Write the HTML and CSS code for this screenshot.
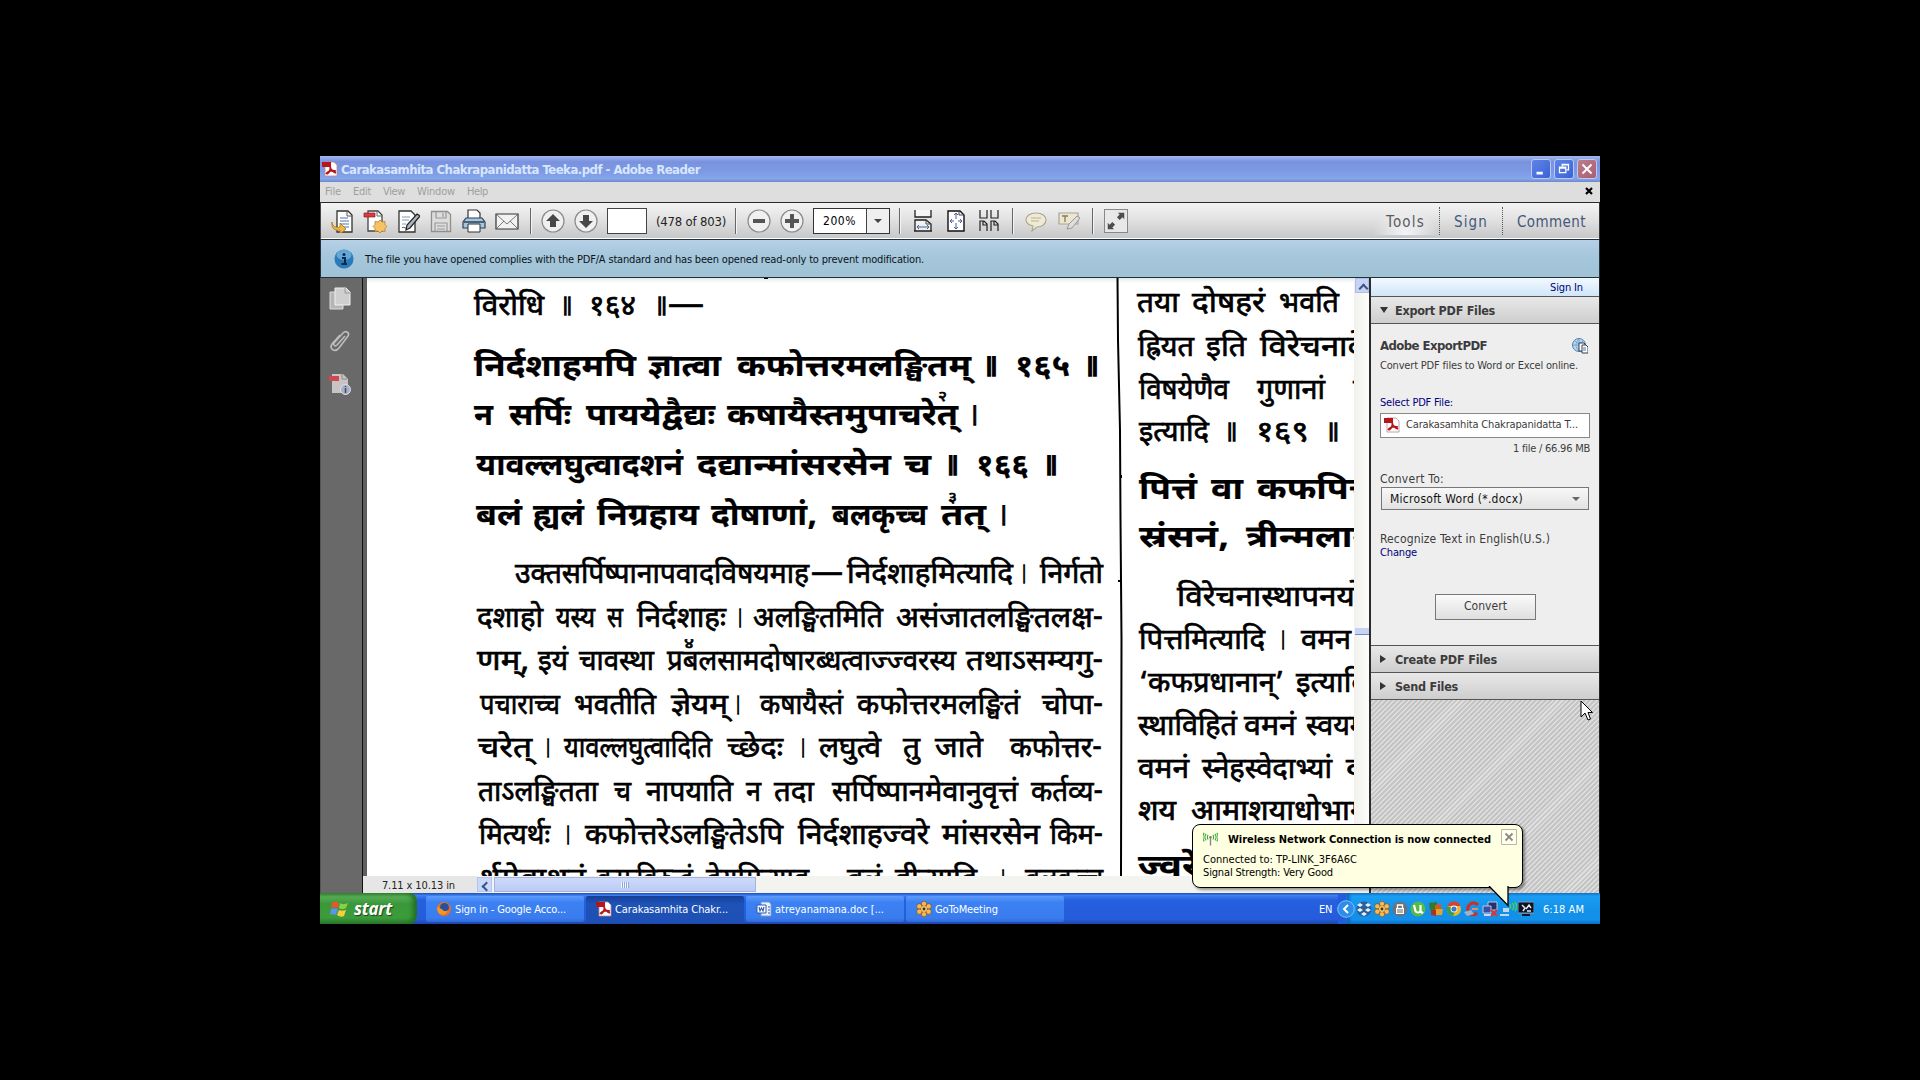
FILE: index.html
```html
<!DOCTYPE html>
<html lang="en">
<head>
    <meta charset="UTF-8">
    <title>Carakasamhita Chakrapanidatta Teeka.pdf - Adobe Reader</title>
    <link rel="stylesheet" href="styles.css">
</head>
<body>

<!-- Shared icons -->
<svg class="defs" width="0" height="0">
    <symbol id="pdf" viewBox="0 0 16 16">
        <path d="M3 1h9l3 3v11H3z" fill="#fff" stroke="#b88" stroke-width=".8"/>
        <path d="M0 1h9v5H0z" fill="#b5161d"/>
        <path d="M5 13c3-2 4-5 3-9M4 13c2-3 6-4 10-3M8 6c1 3 3 5 6 6" fill="none" stroke="#b5161d" stroke-width="1.7"/>
    </symbol>
    <symbol id="flower" viewBox="0 0 16 16">
        <g fill="#f9b850" stroke="#5a3a10" stroke-width=".5">
            <circle cx="8" cy="2.800" r="2.600"/><circle cx="8" cy="13.200" r="2.600"/>
            <circle cx="3.300" cy="5.300" r="2.600"/><circle cx="12.700" cy="5.300" r="2.600"/>
            <circle cx="3.300" cy="10.700" r="2.600"/><circle cx="12.700" cy="10.700" r="2.600"/>
        </g>
        <circle cx="8" cy="8" r="3" fill="#f9c463"/><circle cx="8" cy="8" r="1.400" fill="#4a2c08"/>
    </symbol>
</svg>

<div class="window">
    <div class="title-bar">
        <svg class="title-icon"><use href="#pdf"/></svg>
        <span class="title-text" data-w="359">Carakasamhita Chakrapanidatta Teeka.pdf - Adobe Reader</span>
        <div class="window-buttons">
            <svg class="win-btn" viewBox="0 0 20 20"><path d="M5 13h7v3H5z" fill="#fff"/></svg>
            <svg class="win-btn" viewBox="0 0 20 20"><path d="M8 7V5h7v6h-2M8 5.5h7M5 8h7v6H5zM5 9h7" fill="none" stroke="#fff" stroke-width="1.4"/></svg>
            <svg class="win-btn close" viewBox="0 0 20 20"><path d="M5 5l10 10M15 5L5 15" stroke="#fff" stroke-width="2.2"/></svg>
        </div>
    </div>

    <div class="menu-bar">
        <span data-w="16">File</span>
        <span data-w="18">Edit</span>
        <span data-w="22">View</span>
        <span data-w="38">Window</span>
        <span data-w="21">Help</span>
        <svg class="doc-close" viewBox="0 0 8 8"><path d="M1 1l6 6M7 1L1 7" stroke="#000" stroke-width="2.2"/></svg>
    </div>

    <div class="toolbar">
        <div class="tool-group">
            <svg viewBox="0 0 24 24"><path d="M7 2h11l4 4v17H7z" fill="#fff" stroke="#333" stroke-width="1.3"/><path d="M17 2v5h5" fill="none" stroke="#555"/><path d="M10 9h8M10 12h9M10 15h9M12 18h7" stroke="#4b78b4" stroke-width="1.2"/><path d="M2 13c0 5 5 6 8 5v-4l6 6-6 5v-4c-4 1-9-1-8-8z" fill="#f2b844" stroke="#a9731a" stroke-width=".8"/></svg>
            <svg viewBox="0 0 24 24"><path d="M5 2h10l4 4v16H5z" fill="#fff" stroke="#444" stroke-width="1.3"/><path d="M14 2v5h5" fill="none" stroke="#666"/><path d="M1 4h11v4H1z" fill="#d93a40" stroke="#8e1a1e" stroke-width=".7"/><path d="M17 11l2 2 3-.5v3l2 2-2 2v3l-3-.5-2 2-2-2-3 .5v-3l-2-2 2-2v-3l3 .5z" fill="#f5c363" stroke="#b08030" stroke-width=".8"/></svg>
            <svg viewBox="0 0 24 24"><path d="M3 2h12l4 4v17H3z" fill="#fff" stroke="#333" stroke-width="1.3"/><path d="M6 8h8M6 11h7M6 15h4" stroke="#8298b8"/><path d="M21 5l3 2-10 12-4 2 1-5z" fill="#aab4c2" stroke="#222" stroke-width="1.2"/><path d="M6 19c2-2 3 1 5 0" fill="none" stroke="#334"/></svg>
            <svg viewBox="0 0 24 24"><path d="M2.500 2.500h16l3 3v17h-19z" fill="#ddd" stroke="#8f8f8f" stroke-width="1.3"/><path d="M7 3v6h10V3M6 22v-8h12v8M14 4v4M8 17h8M8 20h8" fill="none" stroke="#999" stroke-width="1.2"/></svg>
            <svg viewBox="0 0 24 24"><path d="M6 10V1h9l3 3v6" fill="#fff" stroke="#333" stroke-width="1.2"/><path d="M4 9h16l3 4v6H1v-6z" fill="#a8c5de" stroke="#2d4257" stroke-width="1.2"/><path d="M2 13h20" stroke="#2d4257" stroke-width="1.5"/><path d="M6 15h12v8H6z" fill="#fff" stroke="#333"/></svg>
            <svg viewBox="0 0 24 24"><path d="M1 5h22v15H1z" fill="#f2f2f2" stroke="#333" stroke-width="1.2"/><path d="M2 6l10 9L22 6M2 19l7-7M22 19l-7-7" fill="none" stroke="#777"/></svg>
        </div>
        <i class="sep"></i>
        <div class="tool-group nav-group">
            <svg viewBox="0 0 24 24"><circle cx="12" cy="12" r="11" class="round"/><path d="M12 5l7 7h-4v6H9v-6H5z" fill="#484848"/></svg>
            <svg viewBox="0 0 24 24"><circle cx="12" cy="12" r="11" class="round"/><path d="M12 19l7-7h-4V6H9v6H5z" fill="#484848"/></svg>
            <div class="page-input"></div>
            <span class="page-count" data-w="70">(478 of 803)</span>
        </div>
        <i class="sep"></i>
        <div class="tool-group">
            <svg viewBox="0 0 24 24"><circle cx="12" cy="12" r="11" class="round"/><path d="M6 10h12v4H6z" fill="#555"/></svg>
            <svg viewBox="0 0 24 24"><circle cx="12" cy="12" r="11" class="round"/><path d="M5 10h5V5h4v5h5v4h-5v5h-4v-5H5z" fill="#555"/></svg>
            <div class="zoom-box"><span data-w="33">200%</span><b></b></div>
        </div>
        <i class="sep"></i>
        <div class="tool-group">
            <svg viewBox="0 0 24 24"><path d="M4 1v7h16V1M4 22V11h11l5 4v7M3 22h18" fill="#fff" fill-opacity=".6" stroke="#222" stroke-width="1.3"/><path d="M15 11v4h5" fill="none" stroke="#444"/><path d="M6 18h12M8 16l-2 2 2 2M16 16l2 2-2 2" fill="none" stroke="#3f63a0"/></svg>
            <svg viewBox="0 0 24 24"><path d="M4 2h12l4 4v16H4z" fill="#fff" stroke="#111" stroke-width="1.4"/><path d="M15 2v4h5" fill="none" stroke="#444"/><path d="M12 4v6M12 14v6M6 12h4M14 12h4M10 6l2-2 2 2M10 18l2 2 2-2M8 10l-2 2 2 2M16 10l2 2-2 2" fill="none" stroke="#4a5f96"/></svg>
            <svg viewBox="0 0 24 24"><path d="M3 1v8h7V1M14 1v8h7V1M3 22V12h4l3 3v7M14 22V12h4l3 3v7M6 12v4h4M17 12v4h4" fill="none" stroke="#222" stroke-width="1.2"/></svg>
        </div>
        <i class="sep"></i>
        <div class="tool-group">
            <svg viewBox="0 0 24 24"><path d="M12 4c6 0 10 3 10 7s-4 7-9 7l-5 4 1-5c-4-1-7-3-7-6 0-4 4-7 10-7z" fill="#efead6" stroke="#aca78f" stroke-width="1.2"/><path d="M7 9h10M7 12h8" stroke="#b9b290"/></svg>
            <svg viewBox="0 0 24 24"><path d="M2 4h19v11H2z" fill="#ece6cf" stroke="#aaa58f" stroke-width="1.2"/><path d="M5 7h6M8 7v6" stroke="#827c66" stroke-width="1.3"/><path d="M20 7l3 2-8 10-5 1 2-5z" fill="#ddd" stroke="#999"/></svg>
        </div>
        <i class="sep"></i>
        <svg class="full-btn" viewBox="0 0 24 24"><path d="M14 3h7v7l-2-2-3 3-3-3 3-3zM10 21H3v-7l2 2 3-3 3 3-3 3z" fill="#4d4d4d"/></svg>
        <div class="tabs">
            <span class="tab tools"><span data-w="39">Tools</span></span>
            <span class="tab sign"><span data-w="34">Sign</span></span>
            <span class="tab comment"><span data-w="69">Comment</span></span>
        </div>
    </div>

    <div class="info-bar">
        <svg viewBox="0 0 20 20"><circle cx="10" cy="10" r="9.5" fill="#2c7ab8"/><ellipse cx="10" cy="6" rx="7.5" ry="5" fill="#7db9e4" opacity=".7"/><path d="M8 9h3v6M7.500 15h5.500" fill="none" stroke="#062a4a" stroke-width="2"/><circle cx="10" cy="5.5" r="1.5" fill="#062a4a"/></svg>
        <span data-w="559">The file you have opened complies with the PDF/A standard and has been opened read-only to prevent modification.</span>
    </div>

    <div class="content">
        <div class="nav-pane">
            <svg viewBox="0 0 24 24"><path d="M2 6h13v17H2z" fill="#b5b5b5" stroke="#ddd"/><path d="M7 2h11l4 4v13H7z" fill="#cfcfcf" stroke="#f0f0f0"/><path d="M17 2v5h5" fill="none" stroke="#999"/></svg>
            <svg viewBox="0 0 24 24"><path d="M17 7l-8 9c-2 2-4 0-3-2L15 4c3-3 7 0 5 3l-9 12c-4 5-10 1-7-4l8-9" fill="none" stroke="#bdbdbd" stroke-width="1.6"/></svg>
            <svg viewBox="0 0 24 24"><path d="M4 2h11l5 5v14H4z" fill="#c9c4c4"/><path d="M14 2v5h5" fill="none" stroke="#888"/><path d="M1 4h10v5H1z" fill="#cf4a4e"/><circle cx="17.5" cy="17.5" r="5" fill="#aab0c4" stroke="#e0e4ee"/><path d="M17.500 16v5M17.500 14v1" stroke="#3c4770" stroke-width="1.5"/></svg>
        </div>
        <div class="doc">
            <div class="doc-view">
                <svg class="page" id="page" viewBox="366 278 987 598">
                    <path class="rule" d="M1116.500 278L1117 340L1119 430L1119.500 520L1120.500 640L1120 876"/>
                    <path class="speck" d="M763 278h4v1h-4zM1117 580h3v2h-3zM1119 475h2v3h-2z"/>
                </svg>
                <div class="vscroll"><b class="up"></b><b class="thumb"></b></div>
            </div>
            <div class="doc-status">
                <span class="page-size"><span data-w="73">7.11 x 10.13 in</span></span>
                <b class="left"></b>
                <div class="hthumb"><i></i></div>
            </div>
        </div>
        <div class="side">
            <div class="sign-in"><span data-w="33">Sign In</span></div>
            <div class="head"><i class="open"></i><span data-w="100">Export PDF Files</span></div>
            <div class="export">
                <div class="export-title">
                    <span data-w="107">Adobe ExportPDF</span>
                    <svg viewBox="0 0 16 16"><circle cx="7" cy="7" r="6.5" fill="#b9d6ee" stroke="#4f7fae"/><path d="M1 7h12M7 1v12M3 3c3 3 5 3 8 0M7 1c-4 4-4 8 0 12" fill="none" stroke="#6f9cc4" stroke-width=".8"/><path d="M7 5h5l1 1v7H7z" fill="#fff" stroke="#345"/><path d="M10 7h4l2 2v6h-6z" fill="#fff" stroke="#345"/><path d="M11 10h3M11 12h3" stroke="#57a"/></svg>
                </div>
                <p class="desc"><span data-w="198">Convert PDF files to Word or Excel online.</span></p>
                <p class="link select-label"><span data-w="73">Select PDF File:</span></p>
                <div class="file-box"><svg><use href="#pdf"/></svg><span data-w="172">Carakasamhita Chakrapanidatta T...</span></div>
                <p class="size"><span data-w="77">1 file / 66.96 MB</span></p>
                <p class="to"><span data-w="64">Convert To:</span></p>
                <div class="select"><span data-w="133">Microsoft Word (*.docx)</span><i></i></div>
                <p class="recog"><span data-w="170">Recognize Text in English(U.S.)</span></p>
                <p class="link change"><span data-w="37">Change</span></p>
                <div class="convert"><span data-w="43">Convert</span></div>
            </div>
            <div class="head line"><i></i><span data-w="102">Create PDF Files</span></div>
            <div class="head line"><i></i><span data-w="63">Send Files</span></div>
            <div class="hatch"></div>
        </div>
    </div>

    <div class="taskbar">
        <div class="start">
            <svg viewBox="0 0 20 20"><path d="M2 4c3-2 5-1 7 0L8 9C6 8 4 8 1 9z" fill="#e8542c"/><path d="M10 4c3 2 5 1 8 0l-2 5c-2 1-4 2-7 0z" fill="#8ccf44"/><path d="M1 10c2-1 5-1 7 0l-2 6c-2-1-4-1-6 0z" fill="#5b94ee"/><path d="M9 11c2 1 4 1 7 0l-2 6c-2 1-4 1-7-1z" fill="#f8cf3a"/></svg>
            <span data-w="38">start</span>
        </div>
        <div class="task">
            <svg viewBox="0 0 16 16"><circle cx="8" cy="8" r="7" fill="#e8701f"/><circle cx="8.5" cy="6.5" r="4.5" fill="#27509c"/><path d="M1 6c2 0 3 2 5 2 1 3 5 2 6 1-1 4-5 6-8 4C2 12 1 9 1 6z" fill="#f3952b"/></svg>
            <span data-w="111">Sign in - Google Acco...</span>
        </div>
        <div class="task active">
            <svg><use href="#pdf"/></svg>
            <span data-w="113">Carakasamhita Chakr...</span>
        </div>
        <div class="task">
            <svg viewBox="0 0 16 16"><path d="M5 1h8l2 2v12H5z" fill="#e9f0fb" stroke="#7a98cc"/><path d="M1 4h9v8H1z" fill="#fff" stroke="#2b5bb0"/><path d="M3 6l1 4 1.500-3L7 10l1-4M12 6h2M12 9h2M12 12h2" fill="none" stroke="#2b5bb0" stroke-width="1.1"/></svg>
            <span data-w="109">atreyanamana.doc [...</span>
        </div>
        <div class="task">
            <svg><use href="#flower"/></svg>
            <span data-w="63">GoToMeeting</span>
        </div>
        <span class="lang"><span data-w="13">EN</span></span>
        <div class="tray">
            <svg class="arrow" viewBox="0 0 18 18"><circle cx="9" cy="9" r="8.3" fill="#2c8ee8" stroke="#7cc0f6"/><path d="M11 5L7 9l4 4" fill="none" stroke="#fff" stroke-width="2"/></svg>
            <svg viewBox="0 0 16 16"><circle cx="8" cy="8" r="7.5" fill="#2a5f98"/><path d="M4 2l3 2-3 2-3-2zM12 2l3 2-3 2-3-2zM4 7l3 2-3 2-3-2zM12 7l3 2-3 2-3-2zM8 11l3 2-3 2-3-2z" fill="#e2f0ff"/></svg>
            <svg><use href="#flower"/></svg>
            <svg viewBox="0 0 16 16"><circle cx="8" cy="8" r="7.5" fill="#6d7278"/><path d="M5.500 7V4h5v3" fill="none" stroke="#fff" stroke-width="1.4"/><path d="M4 7h8v6H4z" fill="#fff"/><path d="M5 9h6M5 11h6" stroke="#666"/></svg>
            <svg viewBox="0 0 16 16"><circle cx="8" cy="8" r="7.5" fill="#57b947"/><path d="M4 4l1.500 6c1 2 4 2 5 0V4M11 10c0 2 1 2 2 1" fill="none" stroke="#fff" stroke-width="2.2"/></svg>
            <svg viewBox="0 0 16 16"><path d="M1 2l8-1v8H2z" fill="#2f7a2c"/><path d="M7 4l6-1v6H7z" fill="#d65a20"/><path d="M3 9h5v6l-5-1z" fill="#b52f1d"/><path d="M8 8h7l-1 6H8z" fill="#e3a22a"/></svg>
            <svg viewBox="0 0 16 16"><circle cx="8" cy="8" r="7" fill="#e4b82d"/><path d="M1.500 5A7 7 0 0 1 14.500 5H8z" fill="#d8412f"/><path d="M1.500 5A7 7 0 0 0 7 15l3-6z" fill="#3d9a48"/><circle cx="8" cy="8" r="3.4" fill="#fff"/><circle cx="8" cy="8" r="2.6" fill="#3b78d0"/></svg>
            <svg viewBox="0 0 16 16"><path d="M14 4C9-1 3 4 4 9s6 6 9 3" fill="none" stroke="#c93325" stroke-width="3.2"/><path d="M0 11l7-2 3 4-7 2z" fill="#9db1d0"/><path d="M8 7h6v2H8z" fill="#e98a76"/></svg>
            <svg viewBox="0 0 16 16"><path d="M6 1h9v8H6z" fill="#27306b" stroke="#b8c8e8"/><path d="M1 5h8v7H1z" fill="#3c4f9c" stroke="#b8c8e8"/><path d="M2 14h7" stroke="#cdd8ee" stroke-width="2"/><path d="M9 9l6 6M15 9l-6 6" stroke="#e03434" stroke-width="2"/></svg>
            <svg class="wifi" viewBox="0 0 16 16"><path d="M3 7h6v4H3zM0 13h9v2H0z" fill="#bcd8f4"/><path d="M10 3c1 2 1 3 0 5M12.500 2c1.500 2 1.500 5 0 7M15 1c2 3 2 6 0 9" fill="none" stroke="#46d05a" stroke-width="1.4"/></svg>
            <svg viewBox="0 0 16 16"><path d="M0 1h16v11H0z" fill="#0c1424" stroke="#8898b0"/><path d="M4 4l3 3-2 3M8 8l3-4 2 3M9 10h4" fill="none" stroke="#dfe8f4" stroke-width="1.5"/><path d="M4 14h8" stroke="#111a2c" stroke-width="2"/></svg>
            <span class="clock" data-w="41">6:18 AM</span>
        </div>
    </div>

    <div class="balloon">
        <svg class="tail" viewBox="0 0 22 21"><path d="M1 0l19 19.500V0" fill="#ffffe1" stroke="#000" stroke-width="1.3"/></svg>
        <div class="balloon-title">
            <svg viewBox="0 0 16 14"><path d="M8 6v8" stroke="#888" stroke-width="1.5"/><circle cx="8" cy="5" r="1.3" fill="#777"/><path d="M5.500 2.500c-1 1.500-1 3.500 0 5M3.300 1.500c-1.500 2-1.500 5 0 7M1.300.5c-2 3-2 6 0 9M10.500 2.500c1 1.500 1 3.500 0 5M12.700 1.500c1.500 2 1.500 5 0 7M14.700.5c2 3 2 6 0 9" fill="none" stroke="#2fa52f" stroke-width="1.1"/></svg>
            <b data-w="263">Wireless Network Connection is now connected</b>
            <svg class="balloon-close" viewBox="0 0 16 16"><path d="M.5.5h15v15H.5z" fill="#fffff0" stroke="#b9b9a0"/><path d="M4.500 4.500l7 7M11.500 4.500l-7 7" stroke="#8a8a80" stroke-width="1.8"/></svg>
        </div>
        <p><span data-w="154">Connected to: TP-LINK_3F6A6C</span></p>
        <p><span data-w="130">Signal Strength: Very Good</span></p>
    </div>

    <svg class="cursor" viewBox="0 0 13 22"><path d="M1 1v16l4-4 3 7 2.500-1L8 12.500h4.500z" fill="#fff" stroke="#000"/></svg>
</div>

<script src="script.js"></script>
</body>
</html>
```
FILE: styles.css
```css
* {
    box-sizing: border-box;
}

body {
    margin: 0;
    background: #000;
    font-family: "DejaVu Sans Condensed", "DejaVu Sans", sans-serif;
    font-stretch: condensed;
    font-size: 11px;
    overflow: hidden;
}

p {
    margin: 0;
}

span, b {
    white-space: nowrap;
}

.defs {
    position: absolute;
}

.window {
    position: relative;
    width: 1280px;
    height: 768px;
    margin: 156px 0 0 320px;
    display: flex;
    flex-direction: column;
    background: #dedede;
}

/* Title bar */
.title-bar {
    height: 26px;
    display: flex;
    align-items: center;
    padding: 0 3px 0 2px;
    background: linear-gradient(#a3b8f0, #7a92de 22%, #7c9ae6 60%, #86a6ea 88%, #6f86cc);
}

.title-icon {
    width: 16px;
    height: 16px;
    margin-right: 3px;
}

.title-text {
    color: #d8e6fc;
    font-size: 13px;
    font-weight: bold;
}

.window-buttons {
    display: flex;
    gap: 3px;
    margin-left: auto;
}

.win-btn {
    width: 20px;
    height: 20px;
    border: 1px solid #b9c9f4;
    border-radius: 3px;
    background: linear-gradient(135deg, #5f85e8, #3b62d6);
}

.close {
    background: linear-gradient(135deg, #bd7c8e, #a9606f);
}

/* Menu */
.menu-bar {
    height: 20px;
    display: flex;
    align-items: center;
    gap: 12px;
    padding: 0 7px 2px 5px;
    color: #a09f9c;
    background: #dedede;
}

.doc-close {
    width: 8px;
    height: 8px;
    margin-left: auto;
}

/* Toolbar */
.toolbar {
    height: 37px;
    display: flex;
    align-items: center;
    padding: 0 13px 0 9px;
    border-top: 1px solid #2a2a2a;
    border-left: 1px solid #444;
    border-right: 1px solid #333;
    background: linear-gradient(#f4f4f4, #e2e2e2 45%, #c8c8c8 96%, #fff 97%);
}

.tool-group {
    display: flex;
    align-items: center;
    gap: 9px;
}

.nav-group {
    margin-left: -1px;
}

.tool-group svg {
    width: 24px;
    height: 24px;
}

.sep {
    width: 1px;
    height: 26px;
    margin: 0 11px;
    background: #666;
    box-shadow: 1px 0 #f4f4f4;
}

.round {
    fill: #f0f0f0;
    stroke: #8b8b8b;
    stroke-width: 1.2;
}

.page-input {
    width: 40px;
    height: 26px;
    border: 1px solid #444;
    background: #fff;
}

.page-count {
    font-size: 13px;
    color: #222;
    margin-right: -2px;
}

.zoom-box {
    width: 77px;
    height: 26px;
    display: flex;
    align-items: center;
    padding-left: 9px;
    border: 1px solid #333;
    background: #fff;
    font-size: 12px;
    margin-right: -2px;
}

.zoom-box b {
    width: 23px;
    height: 24px;
    margin-left: auto;
    border-left: 1px solid #444;
    background: #efefef;
}

.zoom-box b::after {
    content: "";
    display: block;
    margin: 10px 7px;
    border: 4px solid transparent;
    border-top-color: #444;
}

.full-btn {
    width: 24px;
    height: 24px;
    border: 1px solid #888;
    background: #e8e8e8;
}

.tabs {
    display: flex;
    margin-left: auto;
    font-size: 15px;
    color: #44597a;
}

.tab {
    height: 28px;
    line-height: 30px;
    padding: 0 14px;
}

.tab + .tab {
    border-left: 1px dotted #555;
}

.tools {
    color: #5b5b5b;
    background: radial-gradient(ellipse at 50% 100%, #f4f6fa, transparent 70%);
}

.comment {
    padding-right: 0;
}

/* Read-only notice */
.info-bar {
    height: 39px;
    display: flex;
    align-items: center;
    gap: 11px;
    padding: 1px 0 0 13px;
    border: 1px solid #23303a;
    background: linear-gradient(#b6d0e8, #a6c7dc 40%, #9fc2d5);
    color: #0c1318;
}

.info-bar svg {
    width: 20px;
    height: 20px;
}

/* Main content */
.content {
    height: 615px;
    display: flex;
    border-left: 1px solid #555;
    border-right: 1px solid #222;
}

.nav-pane {
    width: 41px;
    display: flex;
    flex-direction: column;
    gap: 19px;
    padding: 8px 0 0 7px;
    background: #696969;
}

.nav-pane svg {
    width: 24px;
    height: 24px;
}

.doc {
    width: 1009px;
    display: flex;
    flex-direction: column;
    border-left: 1px solid #111;
    background: #ececec;
}

.doc-view {
    height: 598px;
    display: flex;
    border-left: 4px solid #5f5f5f;
    background: #fff;
}

.page {
    width: 987px;
    height: 598px;
    background: linear-gradient(#e4e8ea, #fff 5px);
}

.page text {
    font-family: "Noto Sans Devanagari", "Noto Serif Devanagari", "Noto Sans", serif;
    font-size: 29px;
    fill: #000;
    stroke: #000;
    stroke-width: .7px;
}

.page .bold {
    font-size: 31px;
    font-weight: bold;
    stroke-width: .2px;
}

.page .note {
    font-size: 15px;
}

.page .danda {
    stroke-width: 1.6px;
}

.rule {
    fill: none;
    stroke: #000;
    stroke-width: 2;
}

.vscroll {
    flex: 1;
    background: linear-gradient(90deg, #f0f0ec, #fdfdfa);
}

.vscroll b {
    display: block;
    width: 14px;
    margin-left: 1px;
    background: #c6d3f7;
}

.up {
    height: 15px;
    padding: 6px 4px;
    border: 1px solid #aebfe6;
}

.up::after, .left::after {
    content: "";
    display: block;
    width: 5px;
    height: 5px;
    border: solid #3d5485;
    border-width: 2px 0 0 2px;
    transform: rotate(45deg);
}

.vscroll .thumb {
    height: 7px;
    margin-top: 335px;
    border-bottom: 1px solid #6f8ec0;
}

.doc-status {
    height: 17px;
    display: flex;
    background: #f3f3ef;
}

.page-size {
    width: 114px;
    padding: 3px 0 0 19px;
    color: #222;
    background: #e6e6e6;
}

.left {
    width: 15px;
    height: 15px;
    margin-top: 1px;
    padding: 5px;
    border: 1px solid #b4c4ea;
    background: #c9d7fb;
}

.left::after {
    transform: rotate(-45deg);
}

.hthumb {
    width: 262px;
    height: 15px;
    margin: 1px 0 0 2px;
    padding: 4px 0 0 126px;
    border: 1px solid #a5b6de;
    background: linear-gradient(#cddafc, #bccbf5);
}

.hthumb i {
    display: block;
    width: 8px;
    height: 6px;
    background: repeating-linear-gradient(90deg, #f2f6ff 0 1px, #8fa6dc 1px 2px);
}

/* Tools panel */
.side {
    flex: 1;
    display: flex;
    flex-direction: column;
    border-left: 2px solid #2c2c2c;
    background: #eee;
    color: #3c3c3c;
}

.sign-in {
    height: 18px;
    padding: 3px 16px 0 0;
    text-align: right;
    color: #00007c;
    background: linear-gradient(#f2f9ff, #cfe6f8);
}

.head {
    height: 27px;
    display: flex;
    align-items: center;
    padding-left: 9px;
    border-top: 1px solid #555;
    background: linear-gradient(#e8e8e8, #cecece);
    font-size: 12.5px;
    font-weight: bold;
}

.head i {
    width: 15px;
}

.head i::before {
    content: "";
    display: block;
    width: 0;
    border: solid transparent;
    border-width: 4px 0 4px 6px;
    border-left-color: #333;
}

.head .open::before {
    border-width: 6px 4px 0 4px;
    border-color: #333 transparent;
}

.export {
    height: 322px;
    padding: 11px 9px 0 9px;
    border-top: 1px solid #555;
}

.export-title {
    height: 21px;
    display: flex;
    align-items: center;
    justify-content: space-between;
    font-size: 13px;
    font-weight: bold;
}

.export-title svg {
    width: 16px;
    height: 16px;
    margin-right: 2px;
}

.desc {
    height: 20px;
    line-height: 19px;
}

.link {
    color: #00007c;
}

.select-label {
    margin-top: 20px;
    line-height: 13px;
}

.file-box {
    width: 210px;
    height: 25px;
    margin-top: 4px;
    display: flex;
    align-items: center;
    padding: 0 3px 2px;
    border: 1px solid #888;
    background: #fff;
}

.file-box svg {
    width: 16px;
    height: 16px;
    margin-right: 6px;
}

.size {
    line-height: 21px;
    text-align: right;
}

.to {
    margin-top: 12px;
    line-height: 16px;
    font-size: 12px;
}

.select {
    width: 208px;
    height: 23px;
    margin: 0 0 0 1px;
    display: flex;
    align-items: center;
    justify-content: space-between;
    padding: 0 8px;
    border: 1px solid #777;
    background: linear-gradient(#f8f8f8, #e2e2e2);
    color: #111;
    font-size: 12px;
}

.select i {
    border: 4px solid transparent;
    border-top-color: #666;
    margin-top: 4px;
}

.recog {
    margin-top: 22px;
    line-height: 15px;
    font-size: 12px;
}

.change {
    line-height: 12px;
}

.convert {
    width: 101px;
    height: 26px;
    margin: 35px 0 0 55px;
    line-height: 23px;
    text-align: center;
    border: 1px solid #777;
    background: linear-gradient(#fafafa, #dfdfdf);
    font-size: 12px;
}

.hatch {
    flex: 1;
    border-top: 1px solid #555;
    background: repeating-linear-gradient(135deg, #c5c5c5 0 2px, #dedede 2px 3.5px);
}

/* Taskbar */
.taskbar {
    height: 31px;
    display: flex;
    background: linear-gradient(#1c4fb4, #3e7ff0 8%, #2560de 22%, #255cdb 85%, #1d46a8);
    color: #fff;
}

.start {
    width: 97px;
    display: flex;
    align-items: center;
    padding-left: 10px;
    margin-right: 9px;
    border-radius: 0 8px 8px 0;
    background: linear-gradient(#3c8f3a, #57ad55 12%, #399839 35%, #3c9c3c 80%, #2b7a2b);
    box-shadow: inset -4px 0 5px #226e26;
    font: italic bold 17px "Open Sans", sans-serif;
    text-shadow: 1px 1px 1px #17481a;
}

.start svg {
    width: 20px;
    height: 20px;
    margin-right: 4px;
}

.task {
    width: 158px;
    height: 26px;
    margin: 3px 2px 0 0;
    display: flex;
    align-items: center;
    gap: 3px;
    padding-left: 10px;
    border-radius: 2px;
    background: linear-gradient(#5d9bfa, #3c81f3 25%, #3a7cee 85%, #2f69d8);
}

.task svg {
    width: 16px;
    height: 16px;
}

.active {
    background: linear-gradient(#153f98, #1e52b7 30%, #1e50b4);
}

.lang {
    margin-left: auto;
    padding: 10px 6px 0 0;
}

.tray {
    width: 262px;
    display: flex;
    align-items: center;
    gap: 2px;
    background: linear-gradient(90deg, transparent 8px, #0d5fc0 9px, transparent 14px), linear-gradient(90deg, #255cdb 8px, transparent 8px), linear-gradient(#1370c8, #1a9df2 10%, #1290e8 60%, #1391ea 85%, #0c6cc0);
}

.tray svg {
    width: 16px;
    height: 16px;
    flex: none;
}

.tray .arrow {
    width: 18px;
    height: 18px;
    margin: 0 -1px 0 -1px;
}

.tray .wifi {
    overflow: visible;
}

.clock {
    margin: 1px 0 0 7px;
}

/* Network balloon */
.balloon {
    position: absolute;
    left: 872px;
    top: 668px;
    width: 331px;
    height: 64px;
    padding: 4px 5px 0 10px;
    border: 1px solid #000;
    border-radius: 8px;
    background: #ffffe1;
    box-shadow: 2px 2px 3px rgba(0, 0, 0, .4);
    line-height: 13px;
}

.balloon-title {
    display: flex;
    height: 24px;
}

.balloon-title svg {
    width: 15px;
    height: 14px;
    margin: 3px 10px 0 0;
}

.balloon-title b {
    line-height: 21px;
}

.balloon-title .balloon-close {
    width: 16px;
    height: 16px;
    margin: 0 0 0 auto;
}

.tail {
    position: absolute;
    left: 295px;
    top: 61px;
    width: 22px;
    height: 21px;
}

.cursor {
    position: absolute;
    left: 1260px;
    top: 544px;
    width: 13px;
    height: 22px;
}
```
FILE: script.js
```js
// Each line: [baseline, class, then text, left, right for every word]
const lines = [
    [315, '', 'विरोधि', 473, 543, '॥', 560, 571, '१६४', 588, 635, '॥', 654, 666, '—', 667, 703],
    [376, 'bold', 'निर्दशाहमपि', 473, 635, 'ज्ञात्वा', 647, 720, 'कफोत्तरमलङ्घितम्', 736, 970, '॥', 983, 996, '१६५', 1014, 1069, '॥', 1084, 1097],
    [425, 'bold', 'न', 473, 492, 'सर्पिः', 508, 570, 'पाययेद्वैद्यः', 585, 714, 'कषायैस्तमुपाचरेत्', 726, 957, '।', 970, 976],
    [475, 'bold', 'यावल्लघुत्वादशनं', 475, 682, 'दद्यान्मांसरसेन', 696, 890, 'च', 903, 930, '॥', 945, 957, '१६६', 975, 1028, '॥', 1043, 1056],
    [525, 'bold', 'बलं', 475, 521, 'ह्यलं', 532, 583, 'निग्रहाय', 596, 698, 'दोषाणां,', 710, 816, 'बलकृच्च', 831, 926, 'तत्', 940, 985, '।', 999, 1005],
    [583, '', 'उक्तसर्पिष्पानापवादविषयमाह', 514, 808, '—', 810, 842, 'निर्दशाहमित्यादि', 846, 1012, '।', 1020, 1025, 'निर्गतो', 1039, 1102],
    [627, '', 'दशाहो', 476, 542, 'यस्य', 555, 594, 'स', 606, 622, 'निर्दशाहः', 636, 725, '।', 736, 741, 'अलङ्घितमिति', 752, 882, 'असंजातलङ्घितलक्ष-', 895, 1102],
    [670, '', 'णम्,', 476, 528, 'इयं', 537, 567, 'चावस्था', 578, 653, 'प्रबलसामदोषारब्धत्वाज्ज्वरस्य', 666, 955, 'तथाऽसम्यगु-', 965, 1102],
    [714, '', 'पचाराच्च', 479, 559, 'भवतीति', 573, 655, 'ज्ञेयम्', 670, 727, '।', 734, 739, 'कषायैस्तं', 759, 842, 'कफोत्तरमलङ्घितं', 856, 1019, 'चोपा-', 1041, 1102],
    [757, '', 'चरेत्', 477, 531, '।', 544, 549, 'यावल्लघुत्वादिति', 563, 711, 'च्छेदः', 726, 782, '।', 799, 804, 'लघुत्वे', 818, 880, 'तु', 902, 919, 'जाते', 934, 982, 'कफोत्तर-', 1009, 1101],
    [801, '', 'ताऽलङ्घितता', 477, 597, 'च', 613, 630, 'नापयाति', 645, 732, 'न', 745, 760, 'तदा', 773, 813, 'सर्पिष्पानमेवानुवृत्तं', 831, 1017, 'कर्तव्य-', 1030, 1102],
    [844, '', 'मित्यर्थः', 478, 549, '।', 564, 569, 'कफोत्तरेऽलङ्घितेऽपि', 584, 782, 'निर्दशाहज्वरे', 797, 928, 'मांसरसेन', 941, 1039, 'किम-', 1049, 1102],
    [888, '', 'र्थमेवाशनं', 479, 585, 'कफविरुद्धं', 596, 692, 'देयमित्याह', 705, 808, '—', 810, 842, 'बलं', 846, 881, 'हीत्यादि', 894, 976, '।', 999, 1004, 'बलकृच्च', 1024, 1102],

    [312, '', 'तया', 1136, 1178, 'दोषहरं', 1191, 1264, 'भवति', 1278, 1338],
    [356, '', 'ह्रियत', 1137, 1193, 'इति', 1205, 1245, 'विरेचनादे', 1259, 1364],
    [399, '', 'विषयेणैव', 1138, 1228, 'गुणानां', 1256, 1324, 'प', 1352, 1368],
    [441, '', 'इत्यादि', 1138, 1208, '॥', 1224, 1236, '१६९', 1255, 1308, '॥', 1325, 1338],
    [499, 'bold', 'पित्तं', 1138, 1196, 'वा', 1210, 1242, 'कफपित्तं', 1256, 1374],
    [547, 'bold', 'स्रंसनं,', 1138, 1228, 'त्रीन्मलान्', 1245, 1374],
    [606, '', 'विरेचनास्थापनयो', 1176, 1362],
    [649, '', 'पित्तमित्यादि', 1138, 1264, '।', 1279, 1284, 'वमन', 1300, 1350],
    [692, '', '‘कफप्रधानान्’', 1138, 1283, 'इत्यादि', 1295, 1366],
    [735, '', 'स्थाविहितं', 1137, 1236, 'वमनं', 1243, 1295, 'स्वयम', 1305, 1366],
    [778, '', 'वमनं', 1137, 1188, 'स्नेहस्वेदाभ्यां', 1201, 1331, 'वा', 1345, 1375],
    [820, '', 'शय', 1137, 1175, 'आमाशयाधोभाग', 1190, 1366],
    [876, 'bold', 'ज्वरे', 1137, 1198],

    // footnote marks above the verses
    [401, 'note', '२', 937, 946],
    [502, 'note', '३', 947, 956],
    [648, 'note', '४', 683, 693]
];

const page = document.getElementById('page');

for (const [y, cls, ...words] of lines) {
    for (let i = 0; i < words.length; i += 3) {
        const t = document.createElementNS('http://www.w3.org/2000/svg', 'text');
        t.setAttribute('class', '।॥'.includes(words[i]) ? cls + ' danda' : cls);
        t.setAttribute('x', words[i + 1]);
        t.setAttribute('y', y);
        t.setAttribute('textLength', words[i + 2] - words[i + 1]);
        t.setAttribute('lengthAdjust', 'spacingAndGlyphs');
        t.textContent = words[i];
        page.appendChild(t);
    }
}

// Track labels out to their Tahoma widths
document.querySelectorAll('[data-w]').forEach(el => {
    const chars = el.textContent.length;
    const diff = el.dataset.w - el.getBoundingClientRect().width;
    el.style.letterSpacing = (diff / chars) + 'px';
});
```
